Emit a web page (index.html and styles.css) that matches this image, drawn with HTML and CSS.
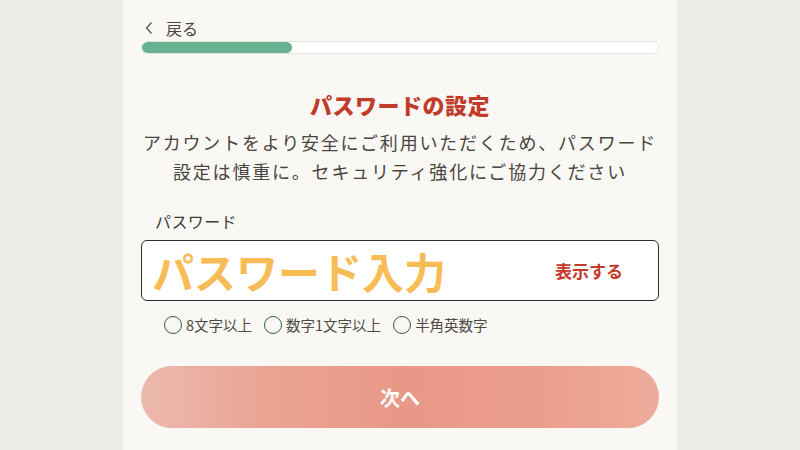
FILE: index.html
```html
<!DOCTYPE html>
<html lang="ja">
<head>
    <meta charset="UTF-8">
    <meta name="viewport" content="width=device-width, initial-scale=1.0">
    <title>パスワードの設定</title>
    <link rel="stylesheet" href="styles.css">
</head>
<body>
    <div class="panel">
        <a class="back" href="#">
            <svg width="10" height="14" viewBox="0 0 10 14"><path d="M7.5 1.5 L2.5 7 L7.5 12.5" fill="none" stroke="#555" stroke-width="1.3"/></svg>
            <span>戻る</span>
        </a>
        <div class="progress"><div class="progress-fill" style="width: 29%"></div></div>

        <h1 class="title">パスワードの設定</h1>
        <p class="desc">アカウントをより安全にご利用いただくため、パスワード<br>設定は慎重に。セキュリティ強化にご協力ください</p>

        <label class="field-label" for="password">パスワード</label>
        <div class="field">
            <input type="password" id="password" placeholder="パスワード入力">
            <button class="toggle" type="button">表示する</button>
        </div>

        <ul class="rules">
            <li><span class="dot"></span>8文字以上</li>
            <li><span class="dot"></span>数字1文字以上</li>
            <li><span class="dot"></span>半角英数字</li>
        </ul>

        <button class="next" type="button">次へ</button>
    </div>
</body>
</html>
```

FILE: styles.css
```css
body {
    font-family: "Noto Sans CJK JP", "Noto Sans", sans-serif;
    margin: 0;
    background-color: #ecede6;
    color: #4b4540;
}
.panel {
    width: 518px;
    height: 432px;
    margin: 0 auto;
    padding: 18px 18px 0;
    background-color: #f9f8f5;
}
.back {
    display: flex;
    align-items: center;
    height: 20px;
    color: #4b4540;
    text-decoration: none;
    font-size: 16px;
}
.back svg {
    margin: 0 12px 0 3px;
}
.progress {
    margin-top: 3px;
    height: 11px;
    border: 1px solid #e2e2df;
    border-radius: 7px;
    background-color: #ffffff;
    overflow: hidden;
}
.progress-fill {
    height: 100%;
    background-color: #66b290;
    border-radius: 7px;
}
.title {
    margin: 36px 0 0;
    text-align: center;
    font-size: 22px;
    line-height: 28px;
    font-weight: 900;
    letter-spacing: 0.5px;
    color: #c23a2a;
}
.desc {
    margin: 10px 0 0;
    text-align: center;
    font-size: 18px;
    line-height: 29px;
    letter-spacing: 1.8px;
    color: #4b4540;
}
.field-label {
    display: block;
    margin: 25px 0 0 14px;
    font-size: 16px;
    line-height: 20px;
    letter-spacing: 0.4px;
    color: #3f3a36;
}
.field {
    display: flex;
    align-items: center;
    margin-top: 9px;
    height: 59px;
    border: 1.5px solid #2f2f2f;
    border-radius: 6px;
    background-color: #ffffff;
    padding: 0 35px 0 10px;
}
.field input {
    flex: 1;
    min-width: 0;
    border: none;
    outline: none;
    background: transparent;
    font-family: inherit;
    font-size: 42px;
    font-weight: bold;
    padding: 0;
    color: #333;
}
.field input::placeholder {
    color: #f8bc57;
    opacity: 1;
}
.toggle {
    border: none;
    background: none;
    padding: 0;
    font-family: inherit;
    font-size: 17px;
    font-weight: bold;
    color: #c23a2a;
    cursor: pointer;
}
.rules {
    display: flex;
    gap: 12px;
    list-style: none;
    margin: 14px 0 0 23px;
    padding: 0;
    font-size: 14.5px;
    line-height: 20px;
    color: #4f4a46;
}
.rules li {
    display: flex;
    align-items: center;
    gap: 4px;
}
.dot {
    width: 16px;
    height: 16px;
    border: 1.5px solid #2f5e4a;
    border-radius: 50%;
}
.next {
    display: block;
    width: 100%;
    height: 62px;
    margin-top: 31px;
    border: none;
    border-radius: 31px;
    background: linear-gradient(90deg, #ecb9ad 0%, #eaa393 25%, #e99888 50%, #eb9d8d 75%, #eeab9b 100%);
    color: #ffffff;
    font-family: inherit;
    font-size: 20px;
    font-weight: bold;
    cursor: pointer;
}
```
